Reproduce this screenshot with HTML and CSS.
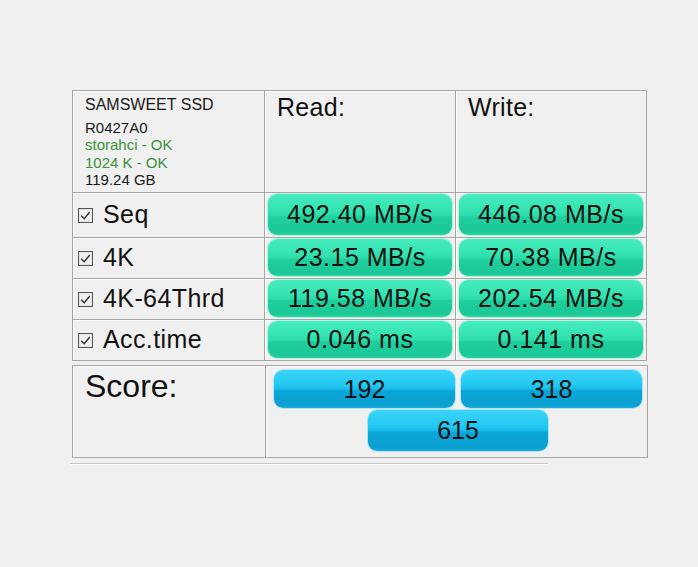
FILE: index.html
```html
<!DOCTYPE html>
<html>
<head>
<meta charset="utf-8">
<link rel="stylesheet" href="styles.css">
</head>
<body>
<div class="wrap">
  <div class="grid">
    <div class="cell info">
      <div class="model">SAMSWEET SSD</div>
      <div class="line">R0427A0</div>
      <div class="line ok">storahci - OK</div>
      <div class="line ok">1024 K - OK</div>
      <div class="line">119.24 GB</div>
    </div>
    <div class="cell head">Read:</div>
    <div class="cell head">Write:</div>

    <div class="cell label"><svg class="cb" viewBox="0 0 14 14"><rect x="0.5" y="0.5" width="13" height="13" fill="none" stroke="#555" /><path d="M3 7.2 L5.8 10 L11 3.8" fill="none" stroke="#333" stroke-width="1.3"/></svg><span>Seq</span></div>
    <div class="cell val"><div class="btn green">492.40 MB/s</div></div>
    <div class="cell val"><div class="btn green">446.08 MB/s</div></div>

    <div class="cell label"><svg class="cb" viewBox="0 0 14 14"><rect x="0.5" y="0.5" width="13" height="13" fill="none" stroke="#555" /><path d="M3 7.2 L5.8 10 L11 3.8" fill="none" stroke="#333" stroke-width="1.3"/></svg><span>4K</span></div>
    <div class="cell val"><div class="btn green">23.15 MB/s</div></div>
    <div class="cell val"><div class="btn green">70.38 MB/s</div></div>

    <div class="cell label"><svg class="cb" viewBox="0 0 14 14"><rect x="0.5" y="0.5" width="13" height="13" fill="none" stroke="#555" /><path d="M3 7.2 L5.8 10 L11 3.8" fill="none" stroke="#333" stroke-width="1.3"/></svg><span>4K-64Thrd</span></div>
    <div class="cell val"><div class="btn green">119.58 MB/s</div></div>
    <div class="cell val"><div class="btn green">202.54 MB/s</div></div>

    <div class="cell label"><svg class="cb" viewBox="0 0 14 14"><rect x="0.5" y="0.5" width="13" height="13" fill="none" stroke="#555" /><path d="M3 7.2 L5.8 10 L11 3.8" fill="none" stroke="#333" stroke-width="1.3"/></svg><span>Acc.time</span></div>
    <div class="cell val"><div class="btn green">0.046 ms</div></div>
    <div class="cell val"><div class="btn green">0.141 ms</div></div>
  </div>

  <div class="score">
    <div class="cell score-label">Score:</div>
    <div class="cell score-vals">
      <div class="btn blue">192</div>
      <div class="btn blue">318</div>
      <div class="btn blue total">615</div>
    </div>
  </div>

  <div class="bottom-line"></div>
</div>
</body>
</html>
```

FILE: styles.css
```css
html, body {
  margin: 0;
  padding: 0;
  background: #f0f0f0;
}

body {
  font-family: "Liberation Sans", Arial, sans-serif;
  color: #111;
}

.wrap {
  padding: 90px 0 0 72px;
}

.grid {
  display: grid;
  width: 573px;
  grid-template-columns: 191px 190px 190px;
  grid-template-rows: 101px 44px 40px 40px 40px;
  gap: 1px;
  background: #a6a6a6;
  border: 1px solid #a6a6a6;
}

.cell {
  background: #f0f0f0;
  box-shadow: inset 1px 1px 0 #fbfbfb;
}

.info {
  padding: 5px 0 0 12px;
}

.model {
  font-size: 16px;
  line-height: 17.5px;
  margin-bottom: 5px;
  color: #1a1a1a;
}

.line {
  font-size: 15px;
  line-height: 17.5px;
  color: #1a1a1a;
}

.line.ok {
  color: #3d8f3d;
}

.head {
  font-size: 25px;
  letter-spacing: 0.3px;
  padding: 2px 0 0 12px;
  color: #111;
}

.label {
  display: flex;
  align-items: center;
  padding-left: 5px;
  font-size: 25px;
  letter-spacing: 0.4px;
}

.label span {
  margin-top: -2px;
}

.cb {
  width: 15px;
  height: 15px;
  margin-right: 10px;
  flex: none;
}

.val {
  display: flex;
  padding: 1px 3px 2px 3px;
}

.btn {
  display: flex;
  align-items: center;
  justify-content: center;
  border-radius: 9px;
  font-size: 25px;
  letter-spacing: 0.5px;
  color: #111;
}

.green {
  flex: 1;
  background: linear-gradient(to bottom, #47ecbf 0%, #34e3b0 40%, #2bdcaa 52%, #1fcf9d 56%, #1bc897 92%, #2cd2a3 100%);
  box-shadow: 0 0 0 1px rgba(150, 240, 210, 0.7);
}

.score {
  margin-top: 4px;
  display: grid;
  width: 574px;
  grid-template-columns: 192px 381px;
  grid-template-rows: 91px;
  gap: 1px;
  background: #a6a6a6;
  border: 1px solid #a6a6a6;
}

.score-label {
  font-size: 32px;
  padding: 0 0 0 12px;
  line-height: 40px;
}

.score-vals {
  display: flex;
  flex-wrap: wrap;
  justify-content: center;
  align-content: flex-start;
  gap: 2px 6px;
  padding: 4px 4px 0 7px;
}

.blue {
  width: 181px;
  height: 38px;
  background: linear-gradient(to bottom, #3ad5f8 0%, #22c7f1 42%, #17bdea 50%, #0aa6d7 55%, #0a9fd0 92%, #1aaedb 100%);
  box-shadow: 0 0 0 1px rgba(140, 220, 245, 0.6);
  font-size: 25px;
  letter-spacing: 0;
}

.blue.total {
  width: 180px;
  height: 41px;
}

.bottom-line {
  margin: 5px 0 0 -2px;
  width: 478px;
  height: 1px;
  background: #c4c4c4;
  border-bottom: 1px solid #fdfdfd;
}
```
